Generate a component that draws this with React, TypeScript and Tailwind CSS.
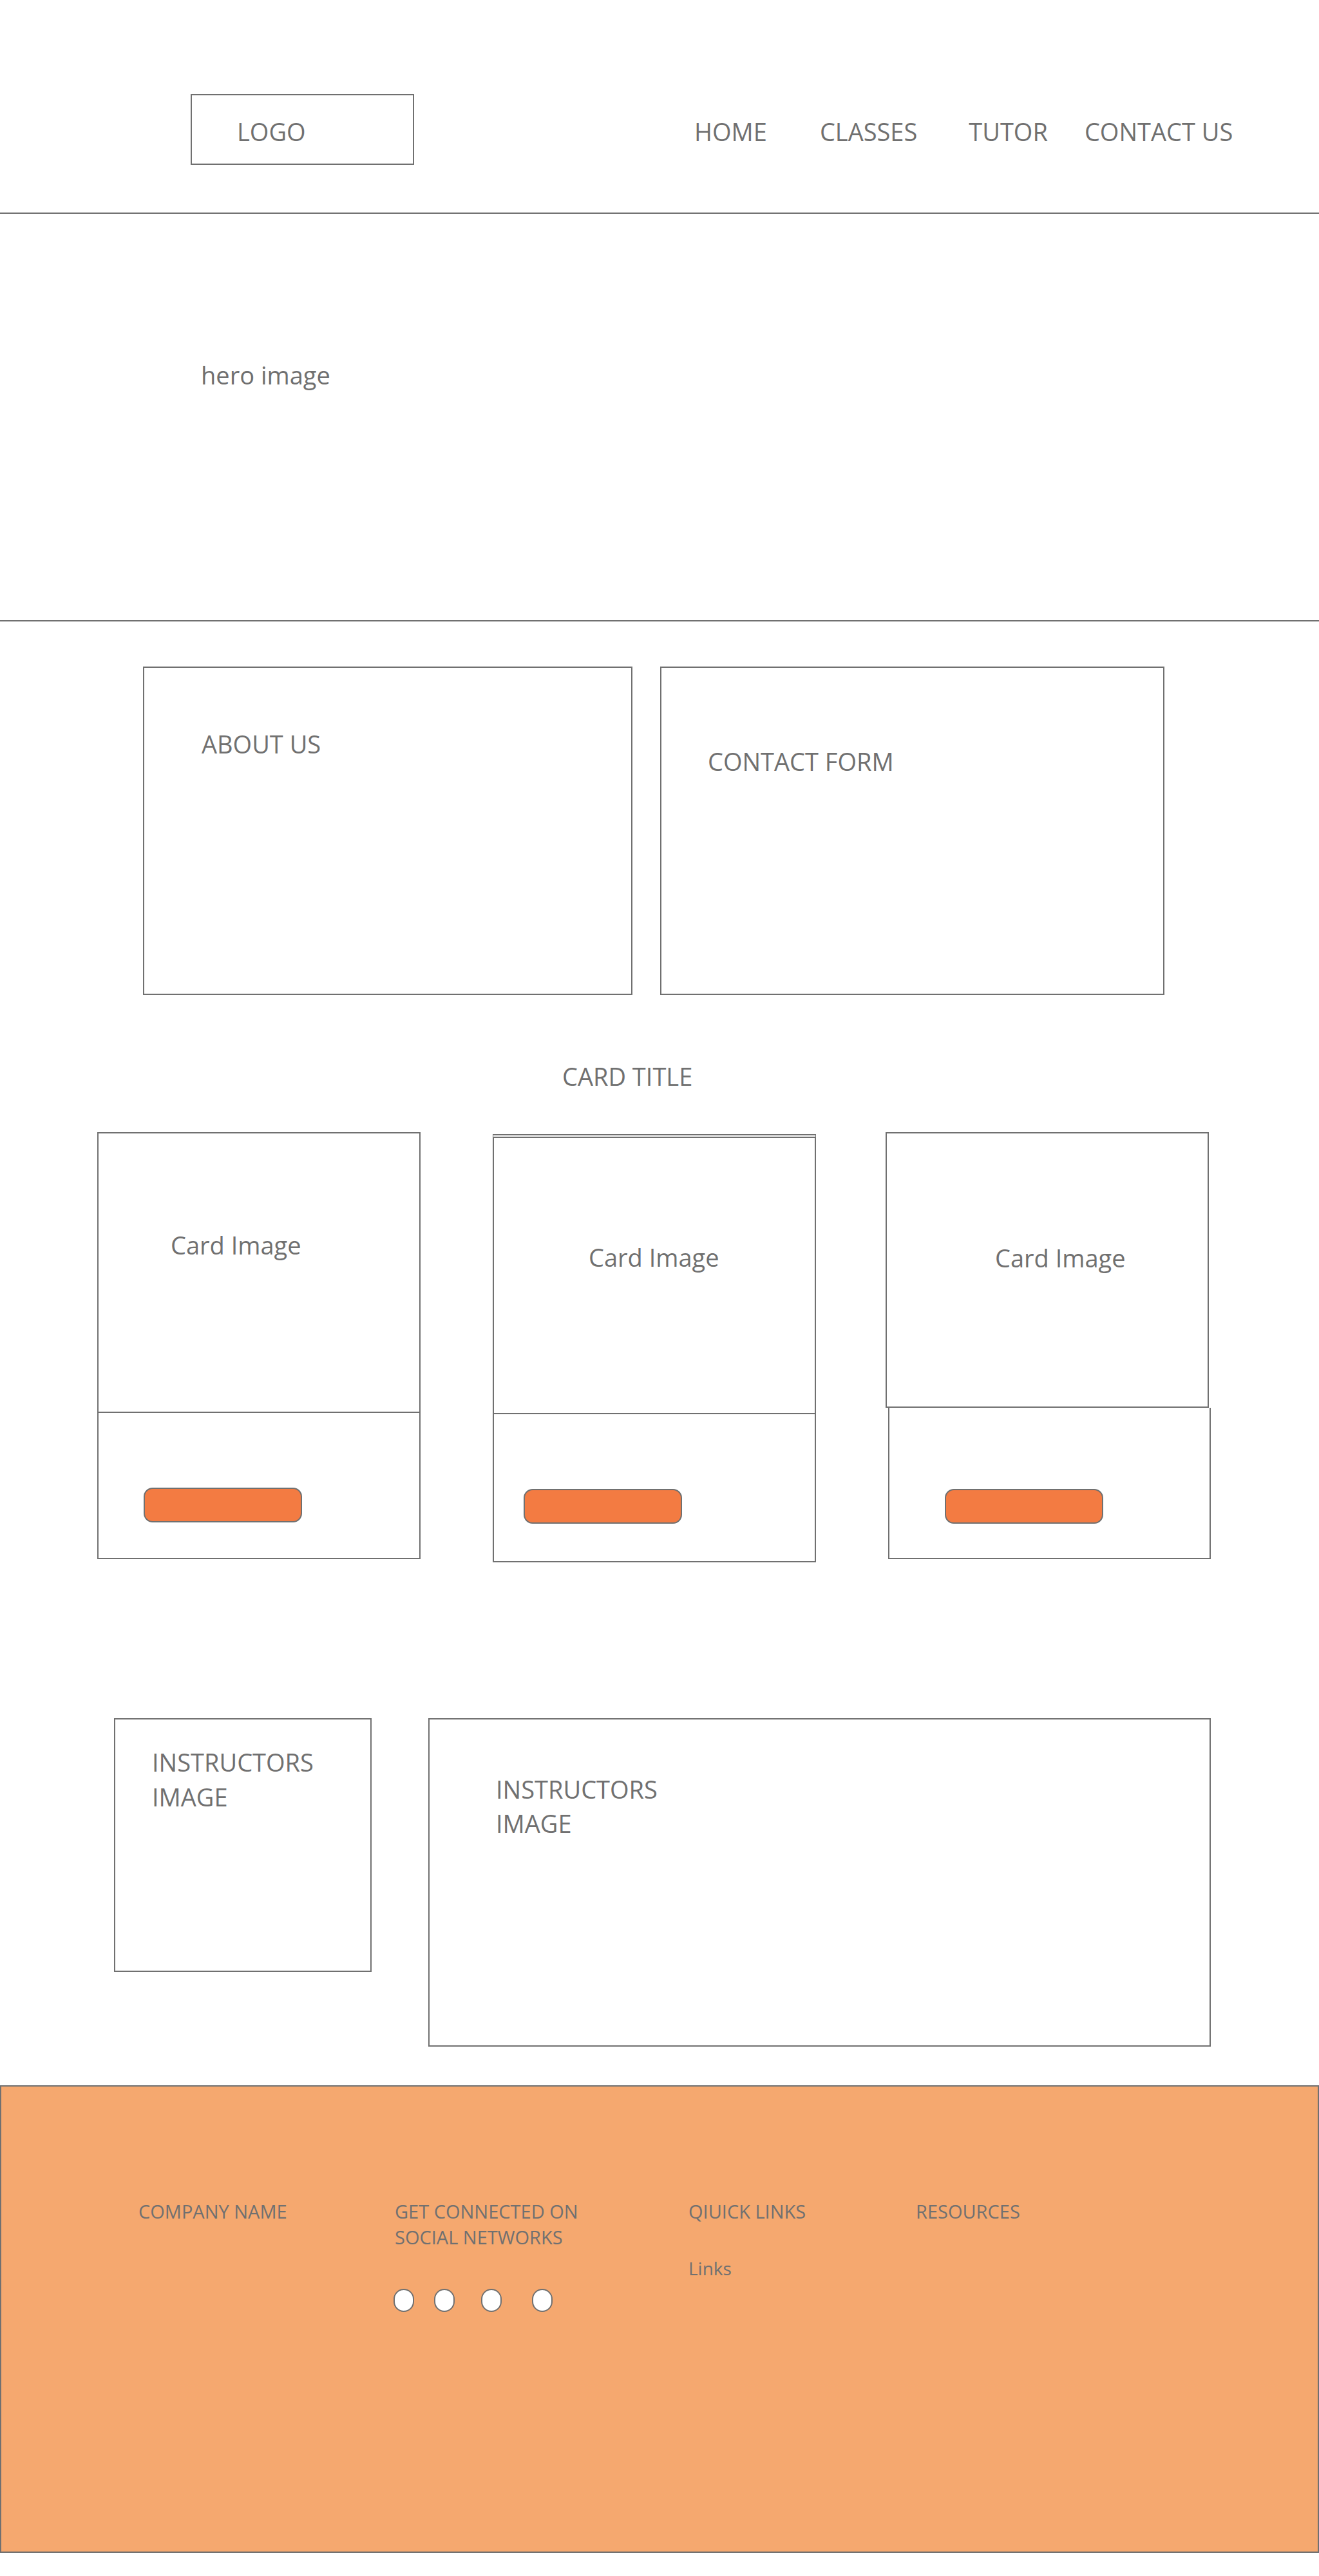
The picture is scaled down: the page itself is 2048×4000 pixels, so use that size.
import React from 'react';

const navItems = [
  { label: 'HOME', className: 'ml-[435px]' },
  { label: 'CLASSES', className: 'ml-[82px]' },
  { label: 'TUTOR', className: 'ml-[80px]' },
  { label: 'CONTACT US', className: 'ml-[57px]' },
];

function OrangeButton() {
  return <div className="w-[246px] h-[54px] rounded-[14px] border-2 border-[#707070] bg-[#f37b42]" />;
}

export default function App() {
  return (
    <div className="w-[2048px] min-h-[4000px] bg-white text-[#707070] font-['Open_Sans',sans-serif]">
      {/* Header */}
      <header className="h-[332px] border-b-2 border-[#707070] pt-[146px] pl-[296px]">
        <div className="flex items-center">
          <div className="w-[347px] h-[110px] border-2 border-[#707070] flex items-center pt-[5px] pl-[70px] text-[38px] leading-none">
            LOGO
          </div>
          <nav className="flex items-center pt-[5px] text-[38px] leading-none">
            {navItems.map((item) => (
              <span key={item.label} className={item.className}>
                {item.label}
              </span>
            ))}
          </nav>
        </div>
      </header>

      {/* Hero */}
      <section className="h-[633px] border-b-2 border-[#707070] pt-[231px] pl-[312px]">
        <p className="text-[38px] leading-none">hero image</p>
      </section>

      {/* About + contact */}
      <section className="mt-[70px] pl-[222px] flex gap-[43px]">
        <div className="w-[760px] h-[510px] border-2 border-[#707070] pt-[99px] pl-[89px]">
          <p className="text-[38px] leading-none">ABOUT US</p>
        </div>
        <div className="w-[783px] h-[510px] border-2 border-[#707070] pt-[126px] pl-[72px]">
          <p className="text-[38px] leading-none">CONTACT FORM</p>
        </div>
      </section>

      {/* Cards */}
      <h2 className="mt-[107px] pl-[873px] text-[38px] leading-none">CARD TITLE</h2>
      <section className="mt-[68px] pl-[151px] flex items-start">
        <div className="w-[502px] h-[663px] border-2 border-[#707070] flex flex-col">
          <div className="h-[434px] border-b-2 border-[#707070] pt-[154px] pl-[112px]">
            <p className="text-[38px] leading-none">Card Image</p>
          </div>
          <div className="pt-[116px] pl-[70px]">
            <OrangeButton />
          </div>
        </div>

        <div className="ml-[112px] mt-[3px] w-[502px] h-[665px] border-2 border-t-[6px] border-double border-[#707070] flex flex-col">
          <div className="h-[429px] border-b-2 border-solid border-[#707070] pt-[166px] pl-[147px]">
            <p className="text-[38px] leading-none">Card Image</p>
          </div>
          <div className="pt-[116px] pl-[46px]">
            <OrangeButton />
          </div>
        </div>

        <div className="ml-[108px] flex flex-col">
          <div className="w-[502px] h-[428px] border-2 border-[#707070] pt-[174px] pl-[168px]">
            <p className="text-[38px] leading-none">Card Image</p>
          </div>
          <div className="ml-[4px] w-[501px] h-[235px] border-2 border-t-0 border-[#707070] pt-[126px] pl-[86px]">
            <OrangeButton />
          </div>
        </div>
      </section>

      {/* Instructors */}
      <section className="mt-[242px] pl-[177px] flex items-start gap-[88px]">
        <div className="w-[400px] h-[394px] border-2 border-[#707070] pt-[39px] pl-[57px]">
          <p className="text-[38px] leading-[54px]">
            INSTRUCTORS
            <br />
            IMAGE
          </p>
        </div>
        <div className="w-[1215px] h-[510px] border-2 border-[#707070] pt-[82px] pl-[103px]">
          <p className="text-[38px] leading-[53px]">
            INSTRUCTORS
            <br />
            IMAGE
          </p>
        </div>
      </section>

      {/* Footer */}
      <footer className="mt-[60px] h-[726px] border-2 border-[#707070] bg-[#f5a86f] pt-[174px] flex text-[29px] leading-[40px]">
        <div className="ml-[213px] w-[398px]">COMPANY NAME</div>
        <div className="w-[456px]">
          <p>
            GET CONNECTED ON
            <br />
            SOCIAL NETWORKS
          </p>
          <div className="mt-[60px] flex -ml-[2px]">
            <span className="w-[32px] h-[36px] rounded-full border-2 border-[#707070] bg-white" />
            <span className="ml-[31px] w-[32px] h-[36px] rounded-full border-2 border-[#707070] bg-white" />
            <span className="ml-[41px] w-[32px] h-[36px] rounded-full border-2 border-[#707070] bg-white" />
            <span className="ml-[47px] w-[32px] h-[36px] rounded-full border-2 border-[#707070] bg-white" />
          </div>
        </div>
        <div className="w-[353px]">
          <p>QIUICK LINKS</p>
          <p className="mt-[48px] text-[28px]">Links</p>
        </div>
        <div>RESOURCES</div>
      </footer>
    </div>
  );
}
